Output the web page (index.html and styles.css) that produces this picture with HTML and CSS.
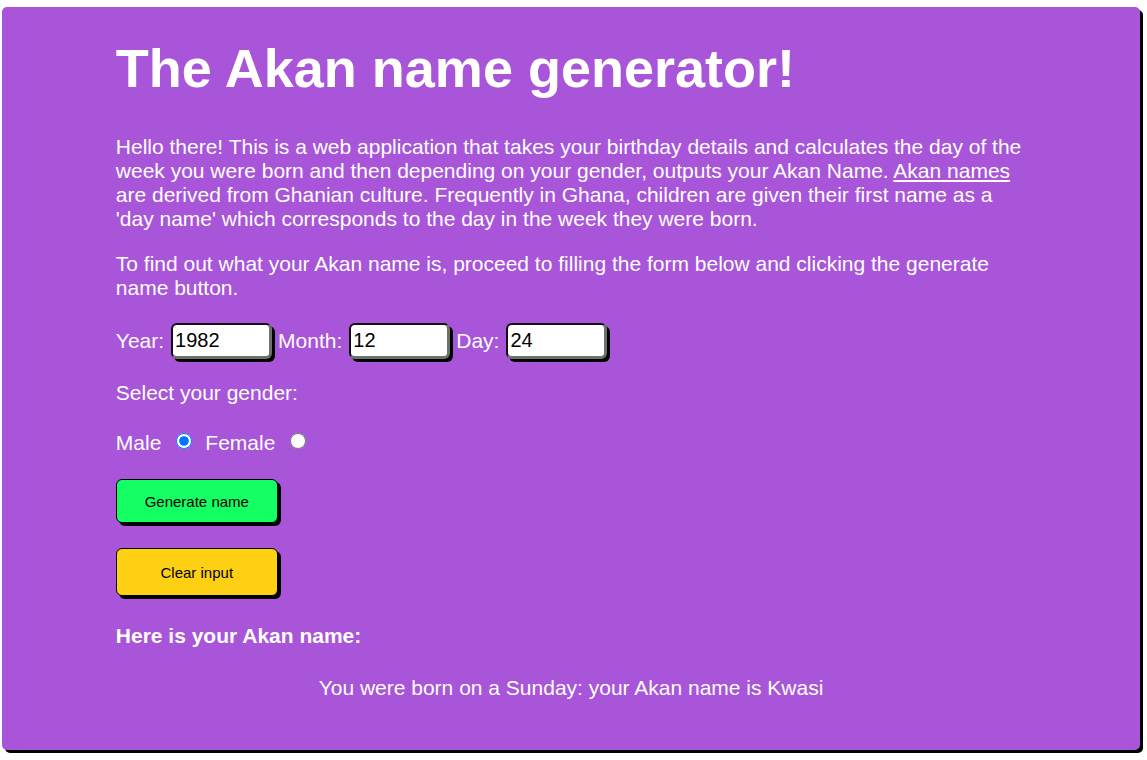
FILE: index.html
```html
<!DOCTYPE html>
<html lang="en">
<head>
<meta charset="utf-8">
<title>Akan name generator</title>
<link rel="stylesheet" href="styles.css">
</head>
<body>
<main class="card">
  <h1 class="title">The Akan name generator!</h1>
  <p class="text">Hello there! This is a web application that takes your birthday details and calculates the day of the week you were born and then depending on your gender, outputs your Akan Name. <a class="link" href="#">Akan names</a> are derived from Ghanian culture. Frequently in Ghana, children are given their first name as a 'day name' which corresponds to the day in the week they were born.</p>
  <p class="text">To find out what your Akan name is, proceed to filling the form below and clicking the generate name button.</p>
  <form class="form">
    <div class="date-row">
      <label class="lbl">Year:</label><input class="field" type="text" value="1982">
      <label class="lbl">Month:</label><input class="field" type="text" value="12">
      <label class="lbl">Day:</label><input class="field" type="text" value="24">
    </div>
    <p class="gender-q">Select your gender:</p>
    <div class="gender-row">
      <label class="lbl">Male</label><input class="radio" type="radio" name="g" checked>
      <label class="lbl">Female</label><input class="radio" type="radio" name="g">
    </div>
    <button class="btn btn-generate" type="button">Generate name</button>
    <button class="btn btn-clear" type="button">Clear input</button>
  </form>
  <h3 class="result-head">Here is your Akan name:</h3>
  <p class="result">You were born on a Sunday: your Akan name is Kwasi</p>
</main>
</body>
</html>
```

FILE: styles.css
```css
html, body {
  margin: 0;
  padding: 0;
  background: #ffffff;
}
body {
  font-family: "Liberation Sans", Arial, sans-serif;
  padding: 7px 7px 7px 2px;
}
.card {
  background: #a855da;
  color: #ffffff;
  border-radius: 5px;
  box-shadow: 3px 3px 0 #000;
  padding: 30px 10% 50px;
  height: 743px;
  box-sizing: border-box;
}
.title {
  font-size: 54px;
  font-weight: bold;
  margin: 0 0 36px;
  line-height: 62px;
}
.text {
  font-size: 21px;
  line-height: 24px;
  margin: 0 0 21px;
}
.link {
  color: #ffffff;
}
.form {
  margin: 0;
}
.date-row {
  display: flex;
  align-items: center;
  font-size: 21px;
  height: 40px;
}
.lbl {
  font-size: 21px;
  margin-right: 7px;
}
.field {
  width: 101px;
  height: 36px;
  box-sizing: border-box;
  font-family: "Liberation Sans", Arial, sans-serif;
  font-size: 20px;
  padding: 0 2px;
  border-style: solid;
  border-width: 2px 3px 3px 2px;
  border-color: #111 #707070 #707070 #111;
  border-radius: 6px;
  box-shadow: 3px 3px 0 #000;
  margin: 0 6px 0 0;
  background: #fff;
  color: #000;
}
.gender-q {
  font-size: 21px;
  line-height: 24px;
  margin: 20px 0 0;
}
.gender-row {
  display: flex;
  align-items: center;
  height: 24px;
  margin: 26px 0 0;
}
.gender-row .lbl {
  margin-right: 0;
}
.radio {
  width: 16px;
  height: 16px;
  margin: -4px 13px 0 15px;
}
.btn {
  display: block;
  width: 162px;
  border: 1px solid #000;
  border-radius: 6px;
  box-shadow: 3px 3px 0 #000;
  font-family: "Liberation Sans", Arial, sans-serif;
  font-size: 15px;
  color: #000;
  padding: 0;
}
.btn-generate {
  background: #14ff64;
  height: 44px;
  margin-top: 24px;
}
.btn-clear {
  background: #fed014;
  height: 48px;
  margin-top: 25px;
}
.result-head {
  font-size: 21px;
  font-weight: bold;
  line-height: 24px;
  margin: 28px 0 0;
}
.result {
  font-size: 21px;
  line-height: 24px;
  text-align: center;
  margin: 28px 0 0;
}
```
